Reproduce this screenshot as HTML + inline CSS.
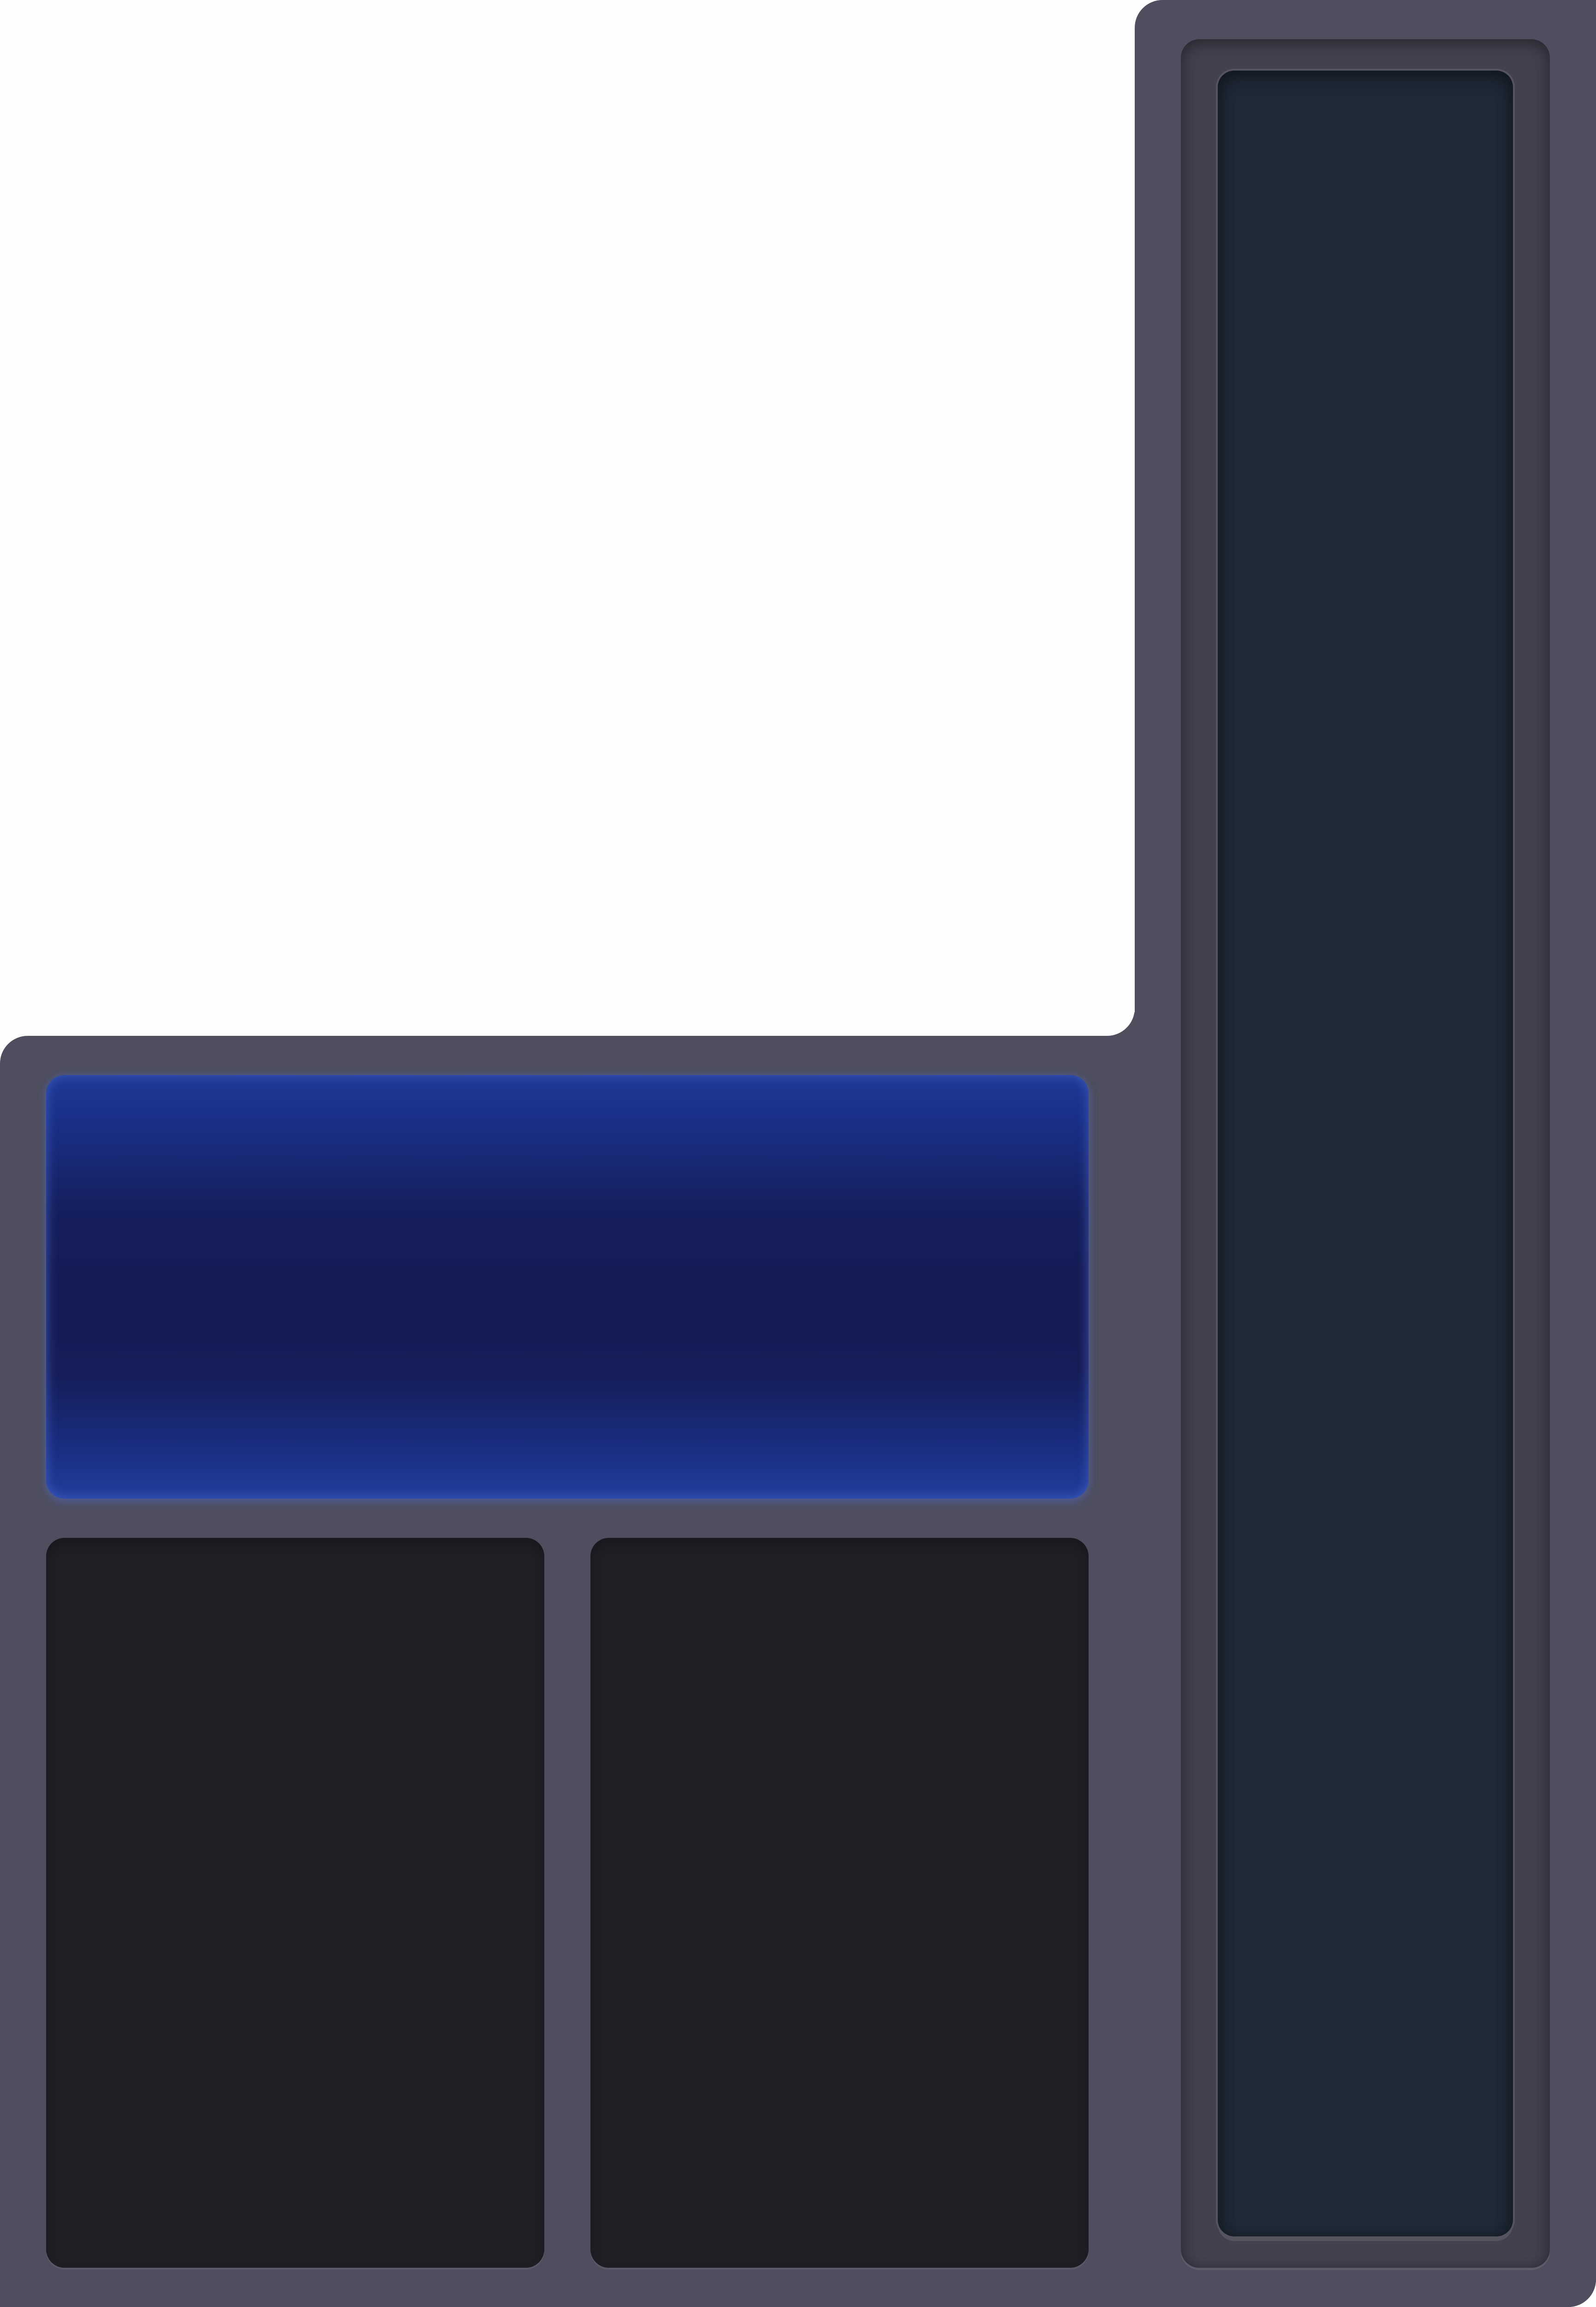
<!DOCTYPE html>
<html><head><style>
html,body{margin:0;padding:0;width:100%;height:100vh;overflow:hidden;background:#fdfdfd;font-family:"Liberation Sans",sans-serif;}
:root{--u:calc(100vh / 5880);--v:calc(100vw / 3460);}
#w{position:relative;width:100vw;height:100vh;overflow:hidden;}
.a{position:absolute;box-sizing:border-box;}
</style></head><body><div id="w">
<div class="a" style="left:calc(var(--v)*2460);top:0;width:calc(var(--v)*1000);height:100vh;background:#4f4e5e;border-radius:60px 0 60px 0;"></div>
<div class="a" style="left:0;top:calc(var(--u)*2640);width:100vw;height:calc(var(--u)*3240);background:#4f4e5e;border-radius:60px 0 60px 0;"></div>
<div class="a" style="left:calc(var(--v)*2400);top:calc(var(--u)*2580);width:calc(var(--v)*60);height:calc(var(--u)*60);background:#4f4e5e;"></div>
<div class="a" style="left:calc(var(--v)*2340);top:calc(var(--u)*2520);width:calc(var(--v)*120);height:calc(var(--u)*120);background:#fdfdfd;border-bottom-right-radius:60px;"></div>
<div class="a" style="left:calc(var(--v)*2560);top:calc(var(--u)*100);width:calc(var(--v)*800);height:calc(var(--u)*5680);background:#42414f;border-radius:40px;box-shadow:inset 0 16px 30px rgba(0,0,0,.22),inset 14px 0 24px rgba(0,0,0,.12),inset -14px 0 24px rgba(0,0,0,.12),0 5px 0 #5d5c6b;"></div>
<div class="a" style="left:calc(var(--v)*2640);top:calc(var(--u)*180);width:calc(var(--v)*640);height:calc(var(--u)*5520);background:#1f2937;border-radius:36px;box-shadow:inset 0 20px 36px rgba(0,0,0,.3),inset 14px 0 24px rgba(0,0,0,.15),inset -14px 0 24px rgba(0,0,0,.15),0 0 0 4px #55545f,0 10px 0 #55545f;"></div>
<div class="a" style="left:calc(var(--v)*100);top:calc(var(--u)*2740);width:calc(var(--v)*2260);height:calc(var(--u)*1080);border-radius:40px;background:linear-gradient(180deg,#1e3a96 0%,#1a3088 10%,#161f5e 32%,#151b54 50%,#161d58 70%,#1a2d80 88%,#213f9c 100%);box-shadow:inset 0 0 20px 4px rgba(70,100,200,.6),0 0 18px rgba(80,110,200,.45),0 12px 20px rgba(80,100,180,.35);"></div>
<div class="a" style="left:calc(var(--v)*100);top:calc(var(--u)*3920);width:calc(var(--v)*1080);height:calc(var(--u)*1860);background:#1f1f26;border-radius:40px;box-shadow:inset 0 14px 24px rgba(0,0,0,.25),0 4px 0 #5a5967;"></div>
<div class="a" style="left:calc(var(--v)*1280);top:calc(var(--u)*3920);width:calc(var(--v)*1080);height:calc(var(--u)*1860);background:#1f1f26;border-radius:40px;box-shadow:inset 0 14px 24px rgba(0,0,0,.25),0 4px 0 #5a5967;"></div>
</div></body></html>
